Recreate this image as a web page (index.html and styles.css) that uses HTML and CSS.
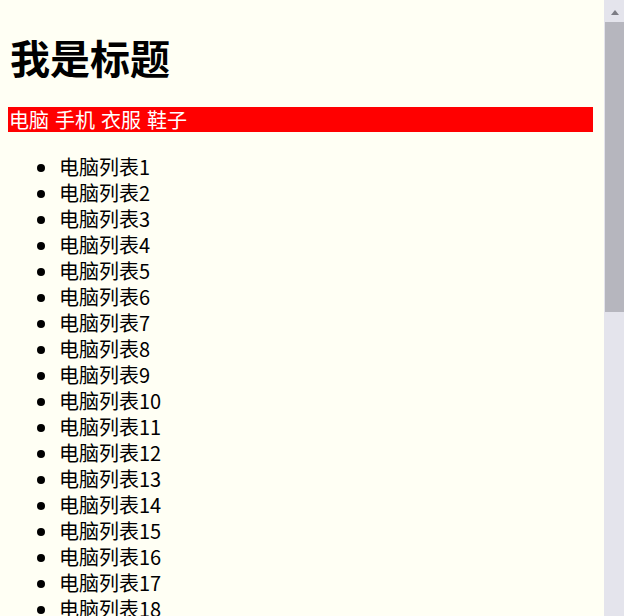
FILE: index.html
```html
<!DOCTYPE html>
<html lang="zh-CN">
<head>
<meta charset="utf-8">
<title>我是标题</title>
<link rel="stylesheet" href="styles.css">
</head>
<body>
<main class="page">
<h1 class="title">我是标题</h1>
<div class="nav">电脑 手机 衣服 鞋子</div>
<ul class="list">
<li>电脑列表1</li>
<li>电脑列表2</li>
<li>电脑列表3</li>
<li>电脑列表4</li>
<li>电脑列表5</li>
<li>电脑列表6</li>
<li>电脑列表7</li>
<li>电脑列表8</li>
<li>电脑列表9</li>
<li>电脑列表10</li>
<li>电脑列表11</li>
<li>电脑列表12</li>
<li>电脑列表13</li>
<li>电脑列表14</li>
<li>电脑列表15</li>
<li>电脑列表16</li>
<li>电脑列表17</li>
<li>电脑列表18</li>
</ul>
</main>
<div class="scrollbar">
<div class="scroll-up"><span class="arrow"></span></div>
<div class="thumb"></div>
</div>
</body>
</html>
```
FILE: styles.css
```css
html {
  background: #fffff4;
}
body {
  margin: 0;
  height: 616px;
  overflow: hidden;
  display: flex;
  font-family: "Noto Sans CJK SC", "Microsoft YaHei", sans-serif;
  color: #000;
}
.page {
  flex: 1;
  min-width: 0;
  padding: 0 11px 0 8px;
  overflow: hidden;
}
.title {
  margin: 31px 0 24px 2px;
  font-size: 40px;
  line-height: 52px;
  font-weight: 700;
}
.nav {
  height: 25px;
  line-height: 25px;
  font-size: 20px;
  word-spacing: 1.5px;
  background: #ff0000;
  color: #fff;
  padding-left: 1px;
}
.list {
  margin: 22px 0 0;
  padding-left: 51px;
  font-size: 20px;
  line-height: 26px;
}
.scrollbar {
  flex: none;
  width: 20px;
  display: flex;
  flex-direction: column;
  background: #e4e4ec;
}
.scroll-up {
  height: 22px;
  display: flex;
  justify-content: center;
  padding-top: 10px;
  box-sizing: border-box;
  padding-left: 1px;
}
.arrow {
  width: 0;
  height: 0;
  border-left: 4px solid transparent;
  border-right: 4px solid transparent;
  border-bottom: 5px solid #7c7c84;
}
.thumb {
  height: 290px;
  margin-left: 1px;
  background: #b6b6be;
}
```
